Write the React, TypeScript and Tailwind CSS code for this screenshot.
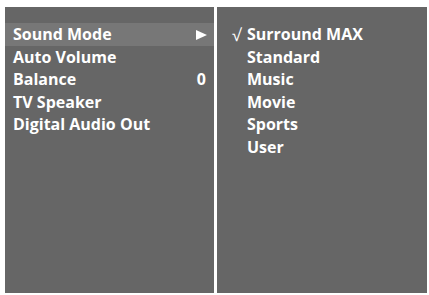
export default function App() {
  const left = [
    { label: "Sound Mode", value: "arrow", active: true },
    { label: "Auto Volume", value: "" },
    { label: "Balance", value: "0" },
    { label: "TV Speaker", value: "" },
    { label: "Digital Audio Out", value: "" },
  ];
  const modes = ["Surround MAX", "Standard", "Music", "Movie", "Sports", "User"];

  return (
    <div
      className="flex w-[429px] h-[295px] bg-white pt-[7px] pl-[5px] pr-[2px] pb-[2px] gap-[3px] text-white font-bold text-[16px]"
      style={{ fontFamily: '"Open Sans", "DejaVu Sans", sans-serif' }}
    >
      <div className="flex flex-col w-[209px] bg-[#666666] pt-[16px]">
        {left.map((row) => (
          <div
            key={row.label}
            className={
              row.active
                ? "flex items-center justify-between h-[22.5px] pl-[8px] pr-[7px] bg-[#777777]"
                : "flex items-center justify-between h-[22.5px] pl-[8px] pr-[8px]"
            }
          >
            <span>{row.label}</span>
            {row.value === "arrow" ? (
              <svg width="11" height="10" viewBox="0 0 11 10" className="mt-[1px]">
                <polygon points="0,0 11,5 0,10" fill="#ffffff" />
              </svg>
            ) : (
              <span>{row.value}</span>
            )}
          </div>
        ))}
      </div>
      <div className="flex flex-col flex-1 bg-[#666666] pt-[16px] pl-[15px]">
        {modes.map((m, i) => (
          <div key={m} className="flex items-center h-[22.5px]">
            <span className="w-[15px] font-normal text-[17px]">{i === 0 ? "√" : ""}</span>
            <span>{m}</span>
          </div>
        ))}
      </div>
    </div>
  );
}
